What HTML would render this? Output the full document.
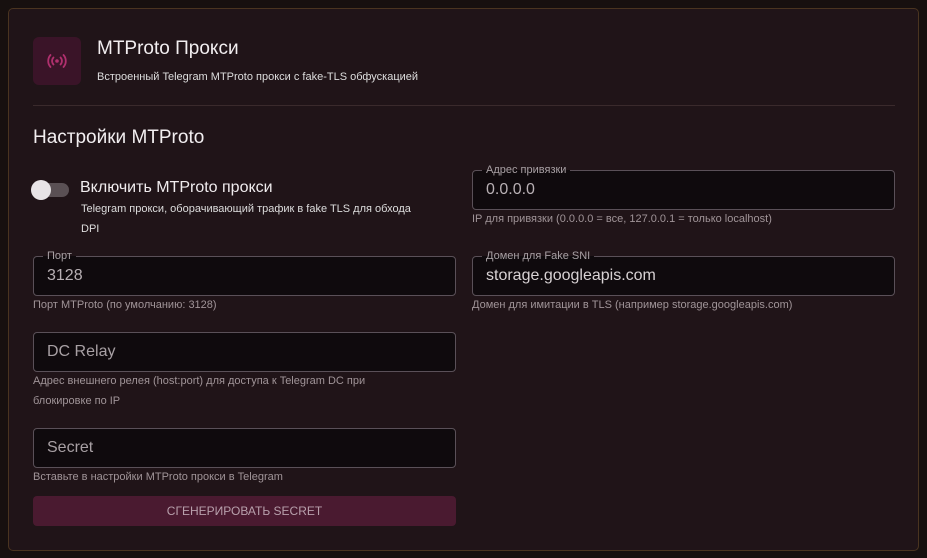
<!DOCTYPE html>
<html><head><meta charset="utf-8"><style>
*{box-sizing:border-box;margin:0;padding:0}
body{width:927px;height:558px;background:#17100f;font-family:"Liberation Sans",sans-serif;position:relative;overflow:hidden;color:#eee}
.card{position:absolute;left:8px;top:8px;width:911px;height:543px;background:#201418;border:1px solid #4a3420;border-radius:5px}
.a{position:absolute}
.icon{left:33px;top:37px;width:48px;height:48px;background:#3a1428;border-radius:6px}
.f{position:absolute;height:40px;border:1px solid #5a5058;border-radius:4px;background:#0f0a0d;color:#b8b0b4;font-size:16px;padding:0 13px;line-height:38px}
.lab{position:absolute;top:-8px;left:9px;font-size:11px;color:#a8a0a4;padding:0 4px;line-height:14px;background:linear-gradient(#201418 50%,#0f0a0d 50%)}
.h{font-size:11px;color:#a09498;line-height:20px}
</style></head><body>
<div class="card"></div>
<div class="a icon"><svg width="48" height="48" viewBox="0 0 48 48" fill="none" stroke="#b0306e" stroke-width="1.8" stroke-linecap="round"><circle cx="24" cy="24" r="1.8" fill="#b0306e" stroke="none"/><path d="M20.5 20.5a5 5 0 0 0 0 7M27.5 20.5a5 5 0 0 1 0 7M17.5 18a9 9 0 0 0 0 12M30.5 18a9 9 0 0 1 0 12"/></svg></div>
<div class="a" style="left:97px;top:38px;font-size:19px;color:#f2eef0">MTProto Прокси</div>
<div class="a" style="left:97px;top:71px;font-size:11px;color:#ddd">Встроенный Telegram MTProto прокси с fake-TLS обфускацией</div>
<div class="a" style="left:33px;top:105px;width:862px;height:1px;background:#3a2a2c"></div>
<div class="a" style="left:33px;top:127px;font-size:19px;color:#f2eef0">Настройки MTProto</div>
<div class="a" style="left:33px;top:183px;width:36px;height:14px;border-radius:7px;background:#5a5054"></div>
<div class="a" style="left:31px;top:180px;width:20px;height:20px;border-radius:50%;background:#e8e4e6"></div>
<div class="a" style="left:80px;top:179px;font-size:16px;color:#f0ecee">Включить MTProto прокси</div>
<div class="a h" style="left:81px;top:199px;width:340px;color:#ddd">Telegram прокси, оборачивающий трафик в fake TLS для обхода DPI</div>
<div class="f" style="left:472px;top:170px;width:423px"><span class="lab">Адрес привязки</span>0.0.0.0</div>
<div class="a h" style="left:472px;top:209px">IP для привязки (0.0.0.0 = все, 127.0.0.1 = только localhost)</div>
<div class="f" style="left:33px;top:256px;width:423px"><span class="lab">Порт</span>3128</div>
<div class="a h" style="left:33px;top:295px">Порт MTProto (по умолчанию: 3128)</div>
<div class="f" style="left:472px;top:256px;width:423px;color:#d8d2d4"><span class="lab">Домен для Fake SNI</span>storage.googleapis.com</div>
<div class="a h" style="left:472px;top:295px">Домен для имитации в TLS (например storage.googleapis.com)</div>
<div class="f" style="left:33px;top:332px;width:423px;color:#a8a0a4">DC Relay</div>
<div class="a h" style="left:33px;top:371px;width:355px">Адрес внешнего релея (host:port) для доступа к Telegram DC при блокировке по IP</div>
<div class="f" style="left:33px;top:428px;width:423px;color:#a8a0a4">Secret</div>
<div class="a h" style="left:33px;top:467px">Вставьте в настройки MTProto прокси в Telegram</div>
<div class="a" style="left:33px;top:496px;width:423px;height:30px;background:#4a1a30;border-radius:4px;text-align:center;line-height:30px;font-size:12px;color:#b8a0ac">СГЕНЕРИРОВАТЬ SECRET</div>
</body></html>
